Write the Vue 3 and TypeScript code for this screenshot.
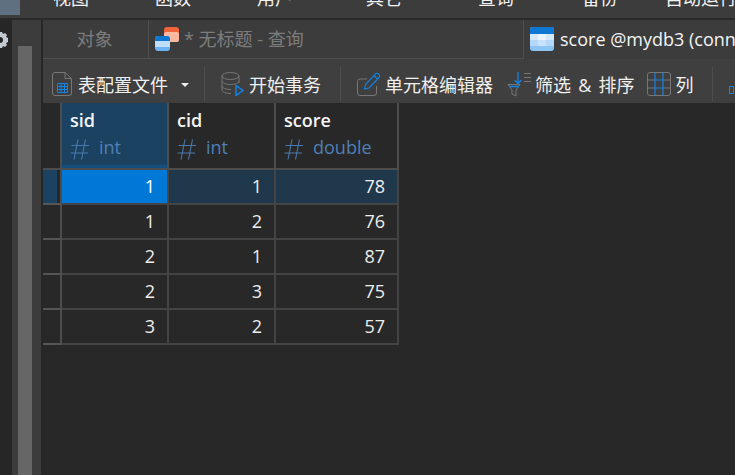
<script setup lang="ts">
const menus = [
  { label: '视图', gap: 53 },
  { label: '函数', gap: 66 },
  { label: '用户', gap: 66 },
  { label: '其它', gap: 73 },
  { label: '查询', gap: 76 },
  { label: '备份', gap: 68 },
  { label: '自动运行', gap: 47 },
]
const rows = [
  [1, 1, 78],
  [1, 2, 76],
  [2, 1, 87],
  [2, 3, 75],
  [3, 2, 57],
]
const columns = [
  { name: 'sid', type: 'int', selected: true },
  { name: 'cid', type: 'int', selected: false },
  { name: 'score', type: 'double', selected: false },
]
</script>

<template>
  <div class="app">
    <div class="menubar">
      <div class="corner"></div>
      <span v-for="m in menus" :key="m.label" class="menu" :style="{ marginLeft: m.gap + 'px' }">{{ m.label }}</span>
    </div>
    <div class="body">
      <aside class="side">
        <svg class="gear" width="9" height="20" viewBox="0 0 9 20">
          <path d="M0 1h2l1 2 2-1 2 2-1 2 2 1v4l-2 1 1 2-2 2-2-1-1 2H0v-5a2.500 2.500 0 0 0 0-6z" fill="#c4ccd2" />
        </svg>
        <div class="track"><div class="thumb"></div></div>
      </aside>
      <main class="main">
        <div class="tabs">
          <div class="tab objects">对象</div>
          <div class="tab query">
            <svg class="tabicon" width="25" height="24" viewBox="0 0 25 24">
              <rect x="9" y="0" width="15" height="15" rx="3" fill="#f0643c" />
              <rect x="9" y="5" width="15" height="10" rx="2" fill="#fbb8a0" />
              <rect x="0" y="9" width="15" height="15" rx="3" fill="#6db4f3" />
              <rect x="0" y="14" width="15" height="6" fill="#c2dffa" />
              <path d="M0 14v-2a3 3 0 0 1 3-3h9a3 3 0 0 1 3 3v2z" fill="#0c78d4" />
            </svg>
            <span>* 无标题 - 查询</span>
          </div>
          <div class="tab active">
            <svg class="tabicon" width="24" height="24" viewBox="0 0 24 24">
              <rect width="24" height="24" rx="3" fill="#8cc4f4" />
              <path d="M0 7V3a3 3 0 0 1 3-3h18a3 3 0 0 1 3 3v4z" fill="#0c78d4" />
              <rect x="0" y="7" width="24" height="6" fill="#d4e8fb" />
              <rect x="0" y="13" width="24" height="6" fill="#b4d8f9" />
              <rect x="8" y="7" width="8" height="6" fill="#e8f3fd" />
              <rect x="8" y="13" width="8" height="6" fill="#c8e2fb" />
            </svg>
            <span class="tabtext">score @mydb3 (connection)</span>
          </div>
        </div>
        <div class="toolbar">
          <button class="tool first">
            <svg width="20" height="24" viewBox="0 0 20 24" fill="none">
              <path d="M3 .5h10l6.500 6V21a2.500 2.500 0 0 1-2.500 2.500H3A2.500 2.500 0 0 1 .5 21V3A2.500 2.500 0 0 1 3 .5z" stroke="#777" />
              <path d="M13 .5v6h6.500" stroke="#777" />
              <path d="M5.500 11.500h10v9h-10zM5.500 14.500h10M5.500 17.500h10M9 11.500v9M12.500 11.500v9" stroke="#1184e8" />
            </svg>
            <span class="tlabel">表配置文件</span>
            <i class="caret"></i>
          </button>
          <i class="sep sep1"></i>
          <button class="tool tx">
            <svg width="23" height="24" viewBox="0 0 23 24" fill="none">
              <ellipse cx="9.500" cy="4" rx="8.500" ry="3.500" stroke="#777" />
              <path d="M1 4v14c0 2 4 3.500 9 3.500M18 4v7M1 9c0 2 4 3.500 8.500 3.500S18 11 18 9M1 14c0 2 4 3.500 9 3.500" stroke="#777" />
              <path d="M15 13.500l7 5-7 5z" stroke="#1184e8" stroke-width="1.400" />
            </svg>
            <span class="tlabel">开始事务</span>
          </button>
          <i class="sep sep2"></i>
          <button class="tool edit">
            <svg width="24" height="24" viewBox="0 0 24 24" fill="none">
              <path d="M10 7H3a2.500 2.500 0 0 0-2.500 2.500V21A2.500 2.500 0 0 0 3 23.500h14a2.500 2.500 0 0 0 2.500-2.500v-7" stroke="#777" />
              <path d="M7.500 17l1-4.500L18.500 2a2 2 0 0 1 3 0l.5.500a2 2 0 0 1 0 3L12 16zM17 3.500l3.500 3.500" stroke="#1184e8" stroke-width="1.100" />
            </svg>
            <span class="tlabel">单元格编辑器</span>
          </button>
          <button class="tool filter">
            <svg width="24" height="26" viewBox="0 0 24 26" fill="none">
              <path d="M1 13.500h12L9 19v6l-4-2v-4z" stroke="#777" />
              <path d="M2 15.500h10" stroke="#1184e8" stroke-width="1.500" />
              <path d="M11 1v11M7.500 9l3.500 3.500L14.500 9" stroke="#1184e8" stroke-width="1.300" />
              <path d="M17 2.500h7M17 6.500h7M17 10.500h7" stroke="#777" />
            </svg>
            <span class="tlabel">筛选 &amp; 排序</span>
          </button>
          <button class="tool cols">
            <svg width="24" height="24" viewBox="0 0 24 24" fill="none">
              <rect x=".5" y=".5" width="23" height="23" rx="2.500" stroke="#777" />
              <path d="M.5 8h7.500M16 8h7.500M.5 16h7.500M16 16h7.500" stroke="#777" />
              <path d="M8 .5v23M16 .5v23M8 8h8M8 16h8" stroke="#1184e8" stroke-width="1.200" />
            </svg>
            <span class="tlabel">列</span>
          </button>
          <i class="sep sep3"></i>
          <i class="stub"></i>
        </div>
        <div class="grid">
          <div class="h rowhead"></div>
          <div v-for="col in columns" :key="col.name" class="h" :class="{ sel: col.selected }">
            <b>{{ col.name }}</b>
            <span class="type">
              <svg class="hash" width="20" height="21" viewBox="0 0 20 21" fill="none">
                <path d="M8 0.500L4 20.500M15.500 0.500L11.500 20.500M1.500 6.500H19M0.500 14H18" stroke="#4a78ad" stroke-width="1.100" />
              </svg>
              {{ col.type }}
            </span>
          </div>
          <template v-for="(r, i) in rows" :key="i">
            <div class="c rowhead" :class="{ rsel: i === 0 }"></div>
            <div v-for="(v, j) in r" :key="j" class="c" :class="{ current: i === 0 && j === 0, rowsel: i === 0 && j > 0 }">{{ v }}</div>
          </template>
        </div>
      </main>
    </div>
  </div>
</template>

<style>
html, body { margin: 0; background: #282828; overflow: hidden; }
</style>

<style scoped>
.app {
  width: 735px;
  height: 475px;
  display: flex;
  flex-direction: column;
  overflow: hidden;
  background: #282828;
  font-family: "Open Sans", "Noto Sans CJK SC", sans-serif;
  font-size: 18px;
  color: #eee;
}
.menubar {
  height: 18px;
  flex: none;
  display: flex;
  align-items: flex-end;
  background: #3c3c3c;
  border-bottom: 2px solid #2a2a2a;
  position: relative;
  overflow: hidden;
  white-space: nowrap;
}
.corner { position: absolute; left: 0; top: 0; width: 20px; height: 15px; background: #5f7181; }
.menu { flex: none; line-height: 26px; margin-bottom: 7px; color: #f2f2f2; }
.body { flex: 1; display: flex; min-height: 0; }
.side { width: 43px; flex: none; display: flex; position: relative; background: #262626; }
.gear { position: absolute; left: 0; top: 11px; }
.track {
  margin-left: 12px;
  width: 29px;
  background: #3c3c3c;
  padding: 26px 9px 0 6px;
  box-sizing: border-box;
}
.thumb { height: 100%; background: #666; }
.main { flex: 1; display: flex; flex-direction: column; min-width: 0; }
.tabs { height: 39px; flex: none; display: flex; background: #3c3c3c; }
.tab { display: flex; align-items: center; box-sizing: border-box; white-space: nowrap; line-height: 36px; padding-bottom: 1px; }
.tabicon { flex: none; }
.objects {
  width: 106px;
  justify-content: center;
  color: #7c7c7c;
  border-right: 1px solid #4e4e4e;
  border-bottom: 1px solid #505050;
  padding-right: 2px;
}
.query {
  width: 375px;
  padding-left: 6px;
  color: #7c7c7c;
  border-right: 1px solid #4e4e4e;
  border-bottom: 1px solid #505050;
}
.query span { margin-left: 4px; }
.active { flex: 1; padding-left: 6px; min-width: 0; overflow: hidden; color: #f4f4f4; }
.tabtext { margin-left: 6px; }
.toolbar {
  height: 44px;
  box-sizing: border-box;
  padding-top: 6px;
  flex: none;
  display: flex;
  align-items: center;
  background: #3f3f3f;
  white-space: nowrap;
  overflow: hidden;
}
.tool {
  display: flex;
  align-items: center;
  flex: none;
  background: none;
  border: 0;
  padding: 0;
  color: #f0f0f0;
  font: inherit;
}
.tlabel { margin-left: 6px; }
.first { margin-left: 9px; }
.caret {
  margin-left: 13px;
  margin-top: 2px;
  border: 4px solid transparent;
  border-top: 4px solid #eee;
  border-bottom: 0;
}
.sep { flex: none; width: 1px; height: 34px; background: #4f4f4f; }
.sep1 { margin-left: 15px; }
.tx { margin-left: 16px; }
.tx .tlabel { margin-left: 5px; }
.sep2 { margin-left: 19px; }
.edit { margin-left: 16px; }
.edit .tlabel { margin-left: 4px; }
.filter { margin-left: 14px; }
.filter .tlabel { margin-left: 4px; word-spacing: 2.500px; }
.cols { margin-left: 13px; }
.cols .tlabel { margin-left: 4px; }
.sep3 { margin-left: 19px; }
.stub {
  flex: none;
  width: 5px;
  height: 8px;
  margin: 11px 0 0 16px;
  border: 1px solid #1184e8;
  box-sizing: border-box;
}
.grid {
  display: grid;
  grid-template-columns: 19px 107px 107px 123px;
  grid-template-rows: 67px repeat(5, 35px);
  width: 356px;
  flex: none;
}
.h {
  box-sizing: border-box;
  border-right: 2px solid #4d4d4d;
  border-bottom: 2px solid #4d4d4d;
  padding: 4px 0 0 8px;
  display: flex;
  flex-direction: column;
}
.h.rowhead { padding: 0; }
.h b { font-weight: 600; line-height: 26px; color: #f4f4f4; }
.type { color: #4f7fb8; line-height: 28px; display: flex; align-items: center; }
.hash { flex: none; margin: 4px 9px 0 0; }
.sel { background: #1b4261; box-shadow: inset 0 -3px 0 #14507f; }
.c {
  box-sizing: border-box;
  border-right: 2px solid #444;
  border-bottom: 2px solid #444;
  text-align: right;
  padding-right: 12px;
  line-height: 33px;
  color: #eee;
}
.c.rowhead { border-right-color: #4d4d4d; border-bottom-color: #555; padding: 0; }
.rsel { background: #1b4261; box-shadow: inset -3px 0 0 #282828; }
.current { background: #0078d7; color: #fff; }
.rowsel { background: #20384c; }
</style>
